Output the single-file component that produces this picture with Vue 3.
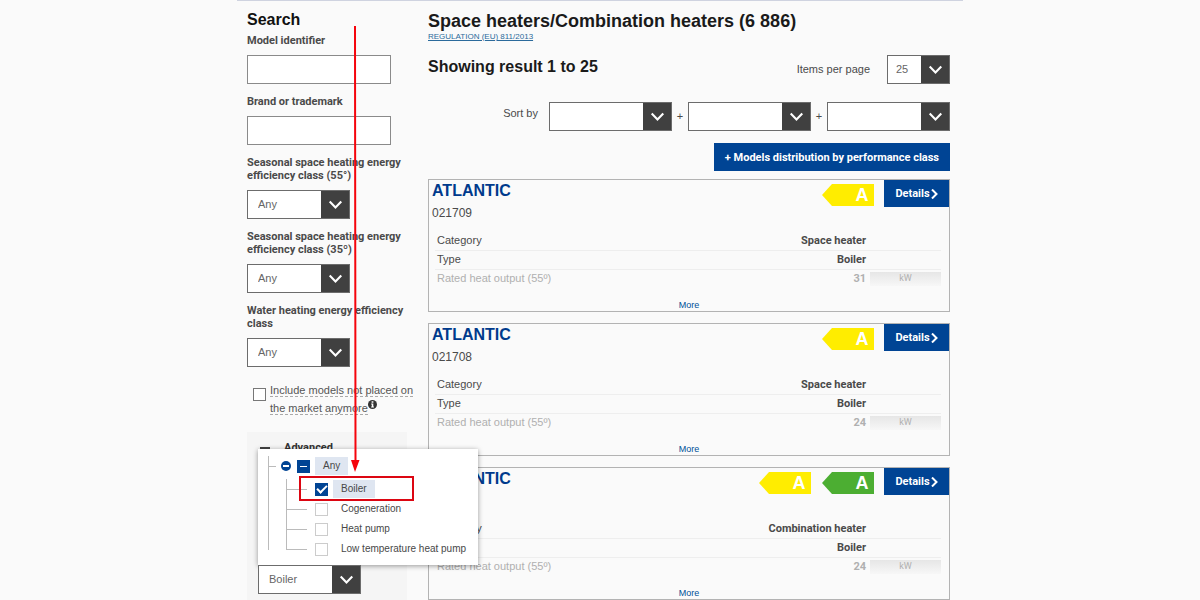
<script setup>
import { ref } from 'vue'

const classFilters = [
  { id: 'c55', label: 'Seasonal space heating energy efficiency class (55°)' },
  { id: 'c35', label: 'Seasonal space heating energy efficiency class (35º)' },
  { id: 'cw', label: 'Water heating energy efficiency class' },
]
const types = ref([
  { id: 'boiler', name: 'Boiler', on: true },
  { id: 'cogen', name: 'Cogeneration', on: false },
  { id: 'pump', name: 'Heat pump', on: false },
  { id: 'lowtemp', name: 'Low temperature heat pump', on: false },
])
const products = [
  { code: '021709', badges: ['yellow'], category: 'Space heater', type: 'Boiler', output: 31 },
  { code: '021708', badges: ['yellow'], category: 'Space heater', type: 'Boiler', output: 24 },
  { code: '', badges: ['yellow', 'green'], category: 'Combination heater', type: 'Boiler', output: 24 },
]
</script>

<template>
  <div class="page">
    <aside class="sidebar">
      <h2 class="side-title">Search</h2>
      <div class="field">
        <label for="model">Model identifier</label>
        <input id="model" type="text" class="text-input" />
      </div>
      <div class="field">
        <label for="brand">Brand or trademark</label>
        <input id="brand" type="text" class="text-input" />
      </div>
      <div v-for="f in classFilters" :key="f.id" class="field">
        <label :for="f.id">{{ f.label }}</label>
        <span class="select filter-select">
          <select :id="f.id"><option>Any</option></select>
          <svg viewBox="0 0 28 28"><path d="M8.500 11l6 6 6-6" /></svg>
        </span>
      </div>

      <div class="include">
        <input id="include" type="checkbox" class="box" />
        <label for="include"><span class="dotted">Include models not placed on<br />the market anymore</span><svg class="info" viewBox="0 0 10 10"><circle cx="5" cy="5" r="5" fill="#333" /><path d="M4 1.500h2v1.500H4zM3.500 4h2.400v3.200h.7v1H3.500v-1h.7V5h-.7z" fill="#fff" /></svg></label>
      </div>

      <section class="advanced">
        <button class="adv-toggle" type="button"><span class="dash"></span>Advanced</button>
        <div class="type-field">
          <div class="tree">
            <div class="node root">
              <svg class="collapse" viewBox="0 0 10 10"><circle cx="5" cy="5" r="5" fill="#004494" /><path d="M2 4h6v2H2z" fill="#fff" /></svg>
              <input id="any" type="checkbox" class="box" :indeterminate.prop="true" />
              <label for="any" class="chosen">Any</label>
            </div>
            <ul class="children">
              <li v-for="t in types" :key="t.id" class="node">
                <input :id="t.id" v-model="t.on" type="checkbox" class="box" />
                <label :for="t.id" :class="{ chosen: t.on }">{{ t.name }}</label>
                <span v-if="t.id === 'boiler'" class="highlight"></span>
              </li>
            </ul>
          </div>
          <span class="select filter-select">
            <select aria-label="Type"><option>Boiler</option></select>
            <svg viewBox="0 0 28 28"><path d="M8.500 11l6 6 6-6" /></svg>
          </span>
        </div>
      </section>

      <svg class="arrow" viewBox="0 0 10 446"><path d="M4 0h2l.500 434h3L5 446 1 434h3.500z" fill="#f5040c" /></svg>
    </aside>

    <main class="main">
      <h1>Space heaters/Combination heaters (6 886)</h1>
      <a href="#" class="regulation">REGULATION (EU) 811/2013</a>
      <div class="result-row">
        <h2>Showing result 1 to 25</h2>
        <label for="per">Items per page</label>
        <span class="select per-select">
          <select id="per"><option>25</option></select>
          <svg viewBox="0 0 28 28"><path d="M8.500 11l6 6 6-6" /></svg>
        </span>
      </div>
      <div class="sort-row">
        <label for="sort1">Sort by</label>
        <template v-for="n in 3" :key="n">
          <span v-if="n > 1" class="plus">+</span>
          <span class="select sort-select">
            <select :id="'sort' + n" :aria-label="'Sort by ' + n"><option></option></select>
            <svg viewBox="0 0 28 28"><path d="M8.500 11l6 6 6-6" /></svg>
          </span>
        </template>
      </div>
      <button class="primary distribution" type="button">+ Models distribution by performance class</button>

      <div class="cards">
        <article v-for="(p, i) in products" :key="i" class="card">
          <header>
            <div class="names">
              <h3>ATLANTIC</h3>
              <p>{{ p.code }}</p>
            </div>
            <svg v-for="b in p.badges" :key="b" class="badge" :class="b" viewBox="0 0 52 22">
              <path d="M0 11L10 0h42v22H10z" />
              <text x="40" y="17" text-anchor="middle">A</text>
            </svg>
            <button class="primary details" type="button">Details<svg viewBox="0 0 7 10"><path d="M1 0.500l4.500 4.500L1 9.500" /></svg></button>
          </header>
          <table>
            <tbody>
              <tr><th scope="row">Category</th><td>{{ p.category }}</td><td class="unit"></td></tr>
              <tr><th scope="row">Type</th><td>{{ p.type }}</td><td class="unit"></td></tr>
              <tr class="faded"><th scope="row">Rated heat output (55º)</th><td>{{ p.output }}</td><td class="unit"><span>kW</span></td></tr>
            </tbody>
          </table>
          <a href="#" class="more">More</a>
        </article>
      </div>
    </main>
  </div>
</template>

<style>
body {
  background: #fafafa;
}
</style>

<style scoped>
* {
  box-sizing: border-box;
}
.page {
  display: flex;
  gap: 21px;
  max-width: 726px;
  margin: 0 auto;
  padding: 0 13px 0 10px;
  border-top: 1px solid #cfd3e0;
  font-family: "Liberation Sans", Arial, sans-serif;
  font-size: 11px;
  line-height: 13px;
  color: #4a4a4a;
}
h1, h2, h3, p, ul {
  margin: 0;
  padding: 0;
}
button, input, select {
  font: inherit;
  color: inherit;
  margin: 0;
}
.field label, .primary, .adv-toggle, td {
  font-family: Roboto, "Liberation Sans", sans-serif;
  font-weight: bold;
}
.sidebar {
  position: relative;
  z-index: 2;
  flex: 0 0 160px;
  min-width: 0;
  display: flex;
  flex-direction: column;
  padding-top: 9px;
}
.side-title {
  font-size: 16px;
  line-height: 20px;
  color: #111;
  margin-bottom: 4px;
}
.field {
  display: flex;
  flex-direction: column;
  gap: 8px;
  margin-bottom: 11px;
}
.text-input {
  width: 144px;
  height: 29px;
  border: 1px solid #8a8a8a;
  background: #fff;
  padding: 0 8px;
}
.select {
  display: flex;
  height: 29px;
  border: 1px solid #6c6c6c;
  background: #fff;
  position: relative;
}
.select select {
  flex: 1;
  min-width: 0;
  appearance: none;
  border: 0;
  background: transparent;
  padding: 0 38px 0 10px;
  color: #666;
}
.select svg {
  position: absolute;
  right: 0;
  top: 0;
  width: 28px;
  height: 100%;
  background: #404040;
  pointer-events: none;
}
.select path {
  fill: none;
  stroke: #fff;
  stroke-width: 2.2;
}
.filter-select {
  width: 103px;
}
.box {
  appearance: none;
  flex: none;
  width: 13px;
  height: 13px;
  border: 1px solid #777;
  background: #fff;
  display: grid;
  place-items: center;
}
.include {
  display: flex;
  align-items: flex-start;
  gap: 4px;
  padding-left: 6px;
  margin-top: 3px;
}
.include .box {
  margin-top: 7px;
}
.include label {
  line-height: 18px;
  color: #555;
  white-space: nowrap;
}
.dotted {
  border-bottom: 1px dashed #aaa;
}
.info {
  width: 9px;
  height: 9px;
  vertical-align: 3px;
}
.advanced {
  flex: 1;
  margin-top: 15px;
  padding: 8px 11px 5px;
  background: #f5f5f5;
}
.adv-toggle {
  display: flex;
  align-items: center;
  gap: 14px;
  width: 100%;
  height: 15px;
  padding: 0 2px;
  border: 0;
  background: none;
  color: #333;
}
.dash {
  width: 10px;
  height: 2px;
  background: #444;
}
.type-field {
  position: relative;
  margin-top: 110px;
}
.tree {
  position: absolute;
  left: 0;
  bottom: 100%;
  width: 220px;
  height: 116px;
  padding: 6px 10px;
  background: #fff;
  box-shadow: 0 1px 5px rgba(0, 0, 0, 0.4);
  font-size: 10px;
  color: #484848;
}
.tree::before {
  content: "";
  position: absolute;
  left: 10px;
  top: 7px;
  bottom: 15px;
  border-left: 1px solid #bbb;
}
.node {
  position: relative;
  display: flex;
  align-items: center;
  height: 20px;
}
.root {
  height: 22px;
  padding-left: 13px;
}
.root::before {
  content: "";
  position: absolute;
  left: 0;
  top: 11px;
  width: 8px;
  border-top: 1px solid #bbb;
}
.collapse {
  width: 10px;
  height: 10px;
  margin-right: 6px;
}
.node label {
  padding: 0 8px 2px;
  margin-left: 5px;
  white-space: nowrap;
}
.node .chosen {
  background: #dfe6f1;
  padding: 2px 8px 3px;
}
.children {
  position: relative;
  list-style: none;
  margin-left: 18px;
  padding: 2px 0 0 29px;
}
.children::before {
  content: "";
  position: absolute;
  left: 0;
  top: 2px;
  bottom: 9px;
  border-left: 1px solid #bbb;
}
.children .node::before {
  content: "";
  position: absolute;
  left: -29px;
  top: 10px;
  width: 21px;
  border-top: 1px solid #bbb;
}
.tree .box {
  border-color: #ccc;
}
.tree .box:checked,
.tree .box:indeterminate {
  background: #004494;
  border-color: #004494;
}
.box:checked::before {
  content: "";
  width: 8px;
  height: 4px;
  margin-bottom: 2px;
  border: solid #fff;
  border-width: 0 0 2px 2px;
  transform: rotate(-45deg);
}
.box:indeterminate::before {
  content: "";
  width: 7px;
  height: 1px;
  background: #fff;
}
.highlight {
  position: absolute;
  left: -16px;
  top: -3px;
  width: 115px;
  height: 25px;
  border: 2px solid #dc0612;
  pointer-events: none;
}
.arrow {
  position: absolute;
  left: 103px;
  top: 25px;
  width: 10px;
  height: 446px;
  pointer-events: none;
}
.main {
  flex: 1;
  min-width: 0;
  display: flex;
  flex-direction: column;
  padding-top: 10px;
}
h1 {
  font-size: 18px;
  line-height: 21px;
  color: #1a1a1a;
}
.regulation {
  align-self: flex-start;
  font-size: 8px;
  line-height: 10px;
  color: #2b6a9b;
}
.result-row {
  display: flex;
  align-items: center;
  margin-top: 13px;
}
.result-row h2 {
  flex: 1;
  font-size: 16px;
  line-height: 20px;
  margin-bottom: 5px;
  color: #1a1a1a;
}
.per-select {
  width: 63px;
  margin-left: 17px;
}
.per-select select {
  padding: 0 28px 0 8px;
}
.sort-row {
  display: flex;
  align-items: center;
  justify-content: flex-end;
  margin-top: 18px;
}
.sort-row label {
  margin: 0 11px 6px 0;
}
.sort-select {
  width: 123px;
}
.plus {
  width: 16px;
  text-align: center;
}
.primary {
  border: 0;
  background: #004494;
  color: #fff;
}
.distribution {
  align-self: flex-end;
  height: 28px;
  margin-top: 12px;
  padding: 0 11px;
}
.cards {
  display: flex;
  flex-direction: column;
  gap: 11px;
  margin-top: 8px;
}
.card {
  height: 133px;
  border: 1px solid #b3b3b3;
  display: flex;
  flex-direction: column;
}
.card header {
  display: flex;
  align-items: flex-start;
  height: 51px;
}
.names {
  flex: 1;
  padding: 1px 3px;
}
.names h3 {
  font-size: 16px;
  line-height: 20px;
  color: #003a8c;
}
.names p {
  font-size: 12px;
  line-height: 14px;
  margin-top: 5px;
}
.badge {
  width: 52px;
  height: 22px;
  margin: 4px 10px 0 0;
}
.badge + .badge {
  margin-left: 1px;
}
.yellow path {
  fill: #ffed00;
}
.green path {
  fill: #4cae32;
}
.badge text {
  font-size: 18px;
  font-weight: bold;
  fill: #fff;
}
.details {
  display: flex;
  align-items: center;
  justify-content: center;
  gap: 1px;
  width: 65px;
  height: 27px;
  padding: 0;
}
.details svg {
  width: 7px;
  height: 10px;
}
.details path {
  fill: none;
  stroke: #fff;
  stroke-width: 2;
}
table {
  margin: 0 8px 0 6px;
  border-collapse: collapse;
}
th, td {
  height: 19px;
  padding: 0 2px;
  border-bottom: 1px solid #eee;
}
th {
  text-align: left;
  font-weight: normal;
}
td {
  text-align: right;
  padding-right: 4px;
}
.faded th, .faded td {
  border: 0;
  color: #b0b0b0;
}
.unit {
  width: 71px;
  padding: 0;
}
.unit span {
  display: block;
  height: 14px;
  background: linear-gradient(#e6e6e6, #f7f7f7);
  text-align: center;
  font-size: 9px;
  font-weight: normal;
}
.more {
  align-self: center;
  margin-top: auto;
  font-size: 9px;
  line-height: 12px;
  color: #004f98;
  text-decoration: none;
}
</style>
